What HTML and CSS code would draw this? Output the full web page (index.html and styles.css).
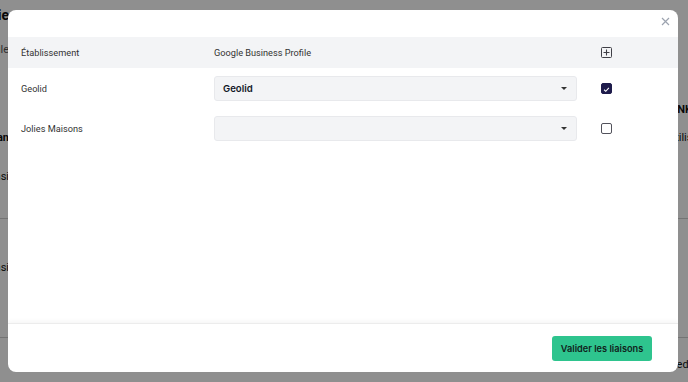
FILE: index.html
```html
<!DOCTYPE html>
<html lang="fr">
<head>
  <meta charset="UTF-8" />
  <title>Liaisons Google Business Profile</title>
  <meta name="viewport" content="width=device-width, initial-scale=1.0" />
  <link rel="stylesheet" href="styles.css">
</head>
<body>
  <div class="page">
    <div class="bg-row r1"><span class="bg-left title">Catégorie</span></div>
    <div class="bg-row r2"><span class="bg-left muted">Profile</span></div>
    <div class="bg-row r3"><span class="bg-left"></span><span class="bg-right strong">LINK</span></div>
    <div class="bg-row r4"><span class="bg-left strong">Océan</span><span class="bg-right">Utilisé</span></div>
    <div class="bg-row r5"><span class="bg-left">Ainsi</span></div>
    <div class="bg-row r6"><span class="bg-left">Ainsi</span></div>
    <div class="bg-row r7"><span class="bg-left"></span><span class="bg-right">Lied</span></div>
  </div>

  <div class="overlay"></div>

  <div class="modal">
    <button class="close" aria-label="Fermer">
      <svg width="9" height="9" viewBox="0 0 9 9"><path d="M1 1L8 8M8 1L1 8" stroke="#9ca3af" stroke-width="1.2" fill="none"/></svg>
    </button>

    <div class="table">
      <div class="thead">
        <div class="cell">Établissement</div>
        <div class="cell">Google Business Profile</div>
        <div class="cell check-cell">
          <span class="add-box">
            <svg width="11" height="11" viewBox="0 0 11 11"><rect x="0.5" y="0.5" width="10" height="10" rx="1" fill="none" stroke="#3f3f46"/><path d="M5.5 2.5v6M2.5 5.5h6" stroke="#3f3f46" stroke-width="1.1"/></svg>
          </span>
        </div>
      </div>

      <div class="trow">
        <div class="cell">Geolid</div>
        <div class="cell">
          <div class="select"><span class="select-value">Geolid</span><span class="caret"></span></div>
        </div>
        <div class="cell check-cell"><span class="checkbox checked">
          <svg width="11" height="11" viewBox="0 0 11 11"><path d="M2.6 5.8l2 1.9 3.8-4.2" stroke="#fff" stroke-width="1.3" fill="none"/></svg>
        </span></div>
      </div>

      <div class="trow">
        <div class="cell">Jolies Maisons</div>
        <div class="cell">
          <div class="select"><span class="select-value"></span><span class="caret"></span></div>
        </div>
        <div class="cell check-cell"><span class="checkbox"></span></div>
      </div>
    </div>

    <div class="footer">
      <button class="btn-primary">Valider les liaisons</button>
    </div>
  </div>
</body>
</html>
```

FILE: styles.css
```css
body {
  margin: 0;
  width: 688px;
  height: 382px;
  overflow: hidden;
  font-family: Roboto, "Liberation Sans", sans-serif;
  background: #fff;
  position: relative;
}

/* page behind the modal */
.page {
  height: 100%;
  color: #111;
  font-size: 11px;
}
.bg-row {
  display: flex;
  justify-content: space-between;
  line-height: 30px;
  white-space: nowrap;
}
.bg-left {
  width: 9px;
  overflow: hidden;
  display: flex;
  justify-content: flex-end;
}
.bg-right {
  width: 20px;
  overflow: hidden;
}
.title {
  font-size: 14px;
  font-weight: bold;
}
.muted {
  color: #555;
}
.strong {
  font-weight: bold;
}
.r1 { height: 30px; }
.r2 { height: 40px; align-items: center; }
.r3 { height: 30px; margin-top: 25px; }
.r4 { height: 25px; align-items: center; line-height: 25px; }
.r5 { height: 56px; margin-top: 12px; border-bottom: 1px solid #cfcfcf; }
.r6 { height: 84px; padding-top: 34px; border-bottom: 1px solid #cfcfcf; }
.r7 { padding-top: 12px; }

.overlay {
  position: absolute;
  inset: 0;
  background: rgba(0, 0, 0, 0.44);
}

/* modal */
.modal {
  position: absolute;
  top: 10px;
  left: 8px;
  width: 670px;
  height: 362px;
  background: #fff;
  border-radius: 8px;
  display: flex;
  flex-direction: column;
  overflow: hidden;
}
.close {
  position: absolute;
  top: 7px;
  right: 8px;
  border: none;
  background: none;
  padding: 0;
  width: 9px;
  height: 9px;
  display: flex;
}

.table {
  flex: 1;
  padding-top: 27px;
}
.thead, .trow {
  display: grid;
  grid-template-columns: 206px 363px 1fr;
  align-items: center;
  font-size: 9.2px;
  color: #333;
}
.thead {
  height: 31px;
  background: #f3f4f6;
}
.trow {
  height: 40px;
}
.cell:first-child {
  padding-left: 13px;
}
.check-cell {
  padding-left: 24px;
  display: flex;
}

.select {
  height: 25px;
  box-sizing: border-box;
  background: #f3f4f6;
  border: 1px solid #e8e9ec;
  border-radius: 3px;
  display: flex;
  align-items: center;
  justify-content: space-between;
  padding: 0 9px 0 8px;
}
.select-value {
  font-family: Inter, "Open Sans", sans-serif;
  font-weight: 600;
  font-size: 9.6px;
  color: #111827;
}
.caret {
  width: 0;
  height: 0;
  border-left: 3px solid transparent;
  border-right: 3px solid transparent;
  border-top: 3px solid #333;
}

.add-box {
  display: flex;
}
.checkbox {
  width: 11px;
  height: 11px;
  box-sizing: border-box;
  border: 1px solid #52525b;
  border-radius: 2px;
  display: flex;
}
.checkbox.checked {
  background: #1e1b4b;
  border-color: #1e1b4b;
}

.footer {
  height: 49px;
  border-top: 1px solid #ececec;
  box-shadow: 0 -2px 4px rgba(0, 0, 0, 0.04);
  display: flex;
  align-items: center;
  justify-content: flex-end;
  padding-right: 26px;
  box-sizing: border-box;
}
.btn-primary {
  height: 25px;
  width: 100px;
  border: none;
  border-radius: 3px;
  background: #2ec48e;
  color: #10231c;
  font-family: Inter, "Open Sans", sans-serif;
  font-weight: 600;
  font-size: 9.2px;
  padding: 0;
}
```
